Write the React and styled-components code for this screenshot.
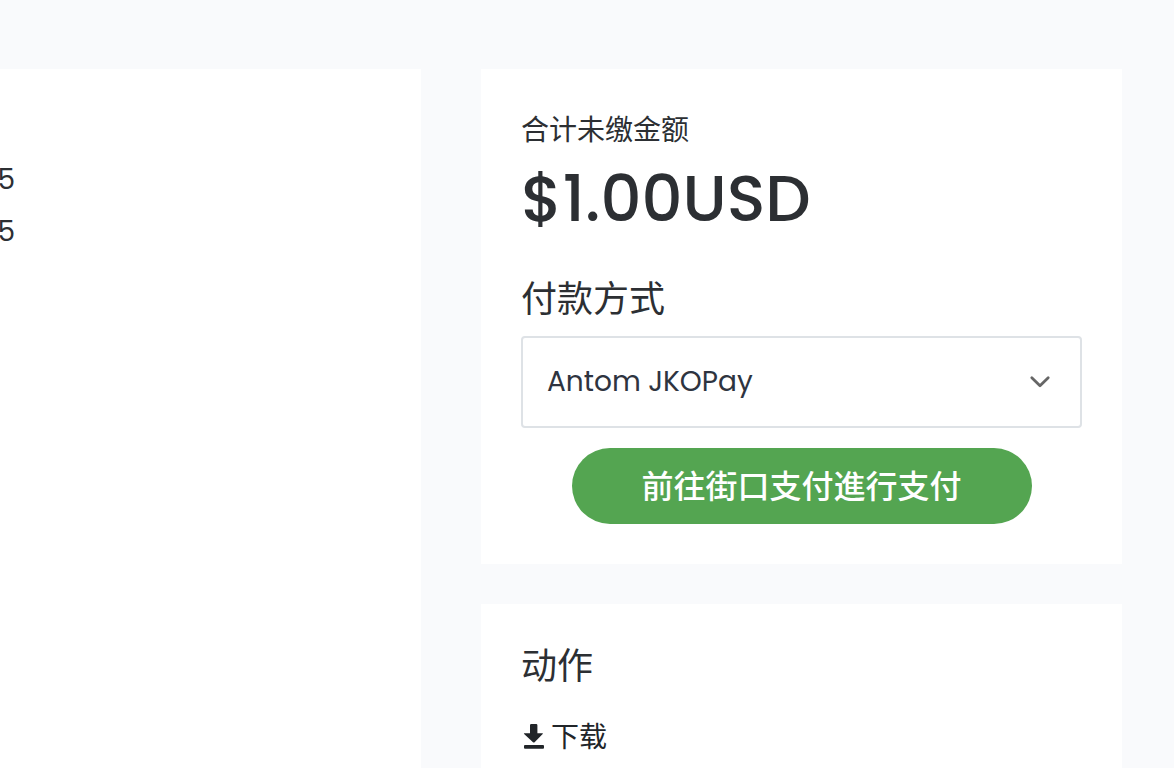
import React from 'react';
import styled, { createGlobalStyle } from 'styled-components';

const GlobalStyle = createGlobalStyle`
  *, *::before, *::after { box-sizing: border-box; }
  body {
    margin: 0;
    background: #f9fafc;
    color: #2c2f33;
    font-family: Poppins, Inter, "Noto Sans CJK SC", sans-serif;
    font-size: 28px;
    line-height: 42px;
    overflow: hidden;
  }
`;

const Page = styled.div`
  display: grid;
  grid-template-columns: minmax(0, 421fr) minmax(0, 641fr);
  gap: 60px;
  min-height: 100vh;
  padding: 69px 52px 0 0;
`;

const Panel = styled.main`
  padding-top: 90px;
  background: #fff;
`;

const DateList = styled.ul`
  display: flex;
  flex-direction: column;
  gap: 10px;
  width: 15px;
  margin: 0;
  padding: 0;
  list-style: none;
`;

const DateItem = styled.li`
  display: flex;
  justify-content: flex-end;
  overflow: hidden;
`;

const Sidebar = styled.aside`
  display: flex;
  flex-direction: column;
  gap: 40px;
`;

const Card = styled.section`
  padding: 40px;
  background: #fff;

  &:last-child {
    flex: 1;
    padding-bottom: 0;
  }
`;

const Label = styled.p`
  margin: 0;
  line-height: 44px;
`;

const Amount = styled.p`
  margin: 0 0 32px;
  font-size: 64px;
  font-weight: 500;
  line-height: 92px;
`;

const Heading = styled.h2`
  margin: 0 0 ${({ $gap }) => $gap}px;
  font-size: 36px;
  font-weight: 400;
  line-height: 45px;

  label { display: block; }
`;

const SelectBox = styled.div`
  position: relative;
  margin-bottom: 20px;
`;

const Select = styled.select`
  display: block;
  width: 100%;
  height: 92px;
  padding: 0 72px 0 24px;
  appearance: none;
  border: 2px solid #dee2e6;
  border-radius: 4px;
  background: #fff;
  color: #2e3440;
  font: inherit;
`;

const Chevron = styled.svg`
  position: absolute;
  top: 50%;
  right: 30px;
  transform: translateY(-50%);
  pointer-events: none;
`;

const PayButton = styled.button`
  display: block;
  width: 460px;
  max-width: 100%;
  height: 76px;
  margin: 0 auto;
  padding: 0;
  border: 0;
  border-radius: 38px;
  background: #54a551;
  color: #fff;
  font-family: inherit;
  font-size: 32px;
  font-weight: 500;
  cursor: pointer;
`;

const ActionLink = styled.a`
  display: inline-flex;
  align-items: center;
  gap: 5px;
  color: #212529;
  text-decoration: none;
`;

export default function App() {
  return (
    <>
      <GlobalStyle />
      <Page lang="zh-CN">
        <Panel>
          <DateList>
            <DateItem>5</DateItem>
            <DateItem>5</DateItem>
          </DateList>
        </Panel>
        <Sidebar>
          <Card>
            <Label>合计未缴金额</Label>
            <Amount>$1.00USD</Amount>
            <Heading $gap={14}>
              <label htmlFor="gateway">付款方式</label>
            </Heading>
            <SelectBox>
              <Select id="gateway" defaultValue="jkopay">
                <option value="jkopay">Antom JKOPay</option>
              </Select>
              <Chevron width="24" height="24" viewBox="0 0 24 24" aria-hidden="true">
                <path d="M3.8 7.8 12 15.8 20.2 7.8" fill="none" stroke="#666" strokeWidth="2.8" strokeLinecap="round" strokeLinejoin="round" />
              </Chevron>
            </SelectBox>
            <PayButton type="button">前往街口支付進行支付</PayButton>
          </Card>
          <Card>
            <Heading $gap={28}>动作</Heading>
            <ActionLink href="#download">
              <svg width="25" height="30" viewBox="0 0 25 30" aria-hidden="true">
                <path d="M10.2 1h5q1.2 0 1.2 1.2v8h5q1 0 .3.9l-8.1 8.1q-.8.7-1.6 0L3.1 11.1q-.7-.9.3-.9H9v-8Q9 1 10.2 1z" fill="#212529" />
                <rect x="3" y="22" width="20" height="3.8" rx="1" fill="#212529" />
              </svg>
              下载
            </ActionLink>
          </Card>
        </Sidebar>
      </Page>
    </>
  );
}
